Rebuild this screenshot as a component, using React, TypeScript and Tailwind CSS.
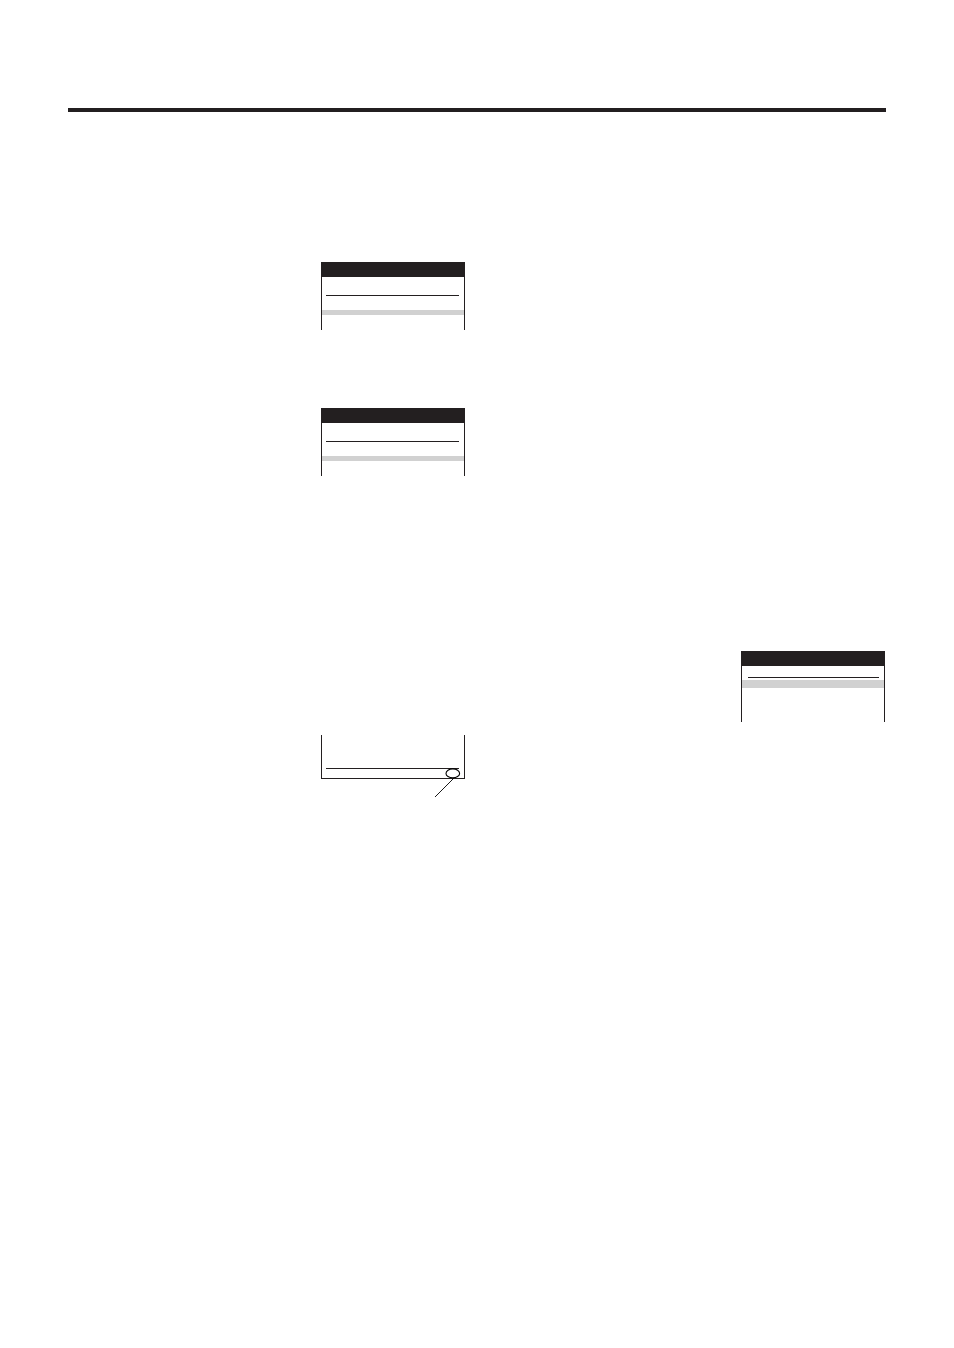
type PanelProps = { compact?: boolean };

function Panel({ compact = false }: PanelProps) {
  return (
    <section className="w-36 border-x border-[#231f20]">
      <div className="-mx-px h-[15px] bg-[#231f20]" />
      {compact ? (
        <>
          <div className="mt-[11px] mr-[5px] ml-[6px] h-px bg-[#231f20]" />
          <div className="mt-[2px] h-2 bg-[#d1d1d1]" />
          <div className="h-[34px]" />
        </>
      ) : (
        <>
          <div className="mt-[18px] mr-[5px] ml-1 h-px bg-[#231f20]" />
          <div className="mt-[14px] h-[5px] bg-[#d1d1d1]" />
          <div className="h-[15px]" />
        </>
      )}
    </section>
  );
}

function FooterPanel() {
  return (
    <section className="relative h-11 w-36 border-x border-b border-[#231f20] pt-[33px]">
      <div className="mr-[5px] ml-1 h-px bg-[#231f20]" />
      <svg
        className="absolute top-[32px] right-[2px] h-8 w-8"
        viewBox="0 0 32 32"
        fill="none"
        stroke="#000"
        aria-hidden="true"
      >
        <ellipse cx="22.8" cy="6.4" rx="6.8" ry="4.5" strokeWidth="1.1" />
        <path d="M24 11 L5 30" strokeWidth="0.9" />
      </svg>
    </section>
  );
}

export default function App() {
  return (
    <main className="min-h-screen bg-white px-[68px] pt-[108px]">
      <hr className="h-1 border-0 bg-[#231f20]" />
      <div className="grid grid-cols-2 gap-[23px] pr-px">
        <div className="flex flex-col items-end pt-[150px]">
          <Panel />
          <div className="mt-[78px]">
            <Panel />
          </div>
          <div className="mt-[259px]">
            <FooterPanel />
          </div>
        </div>
        <div className="flex flex-col items-end pt-[539px]">
          <Panel compact />
        </div>
      </div>
    </main>
  );
}
